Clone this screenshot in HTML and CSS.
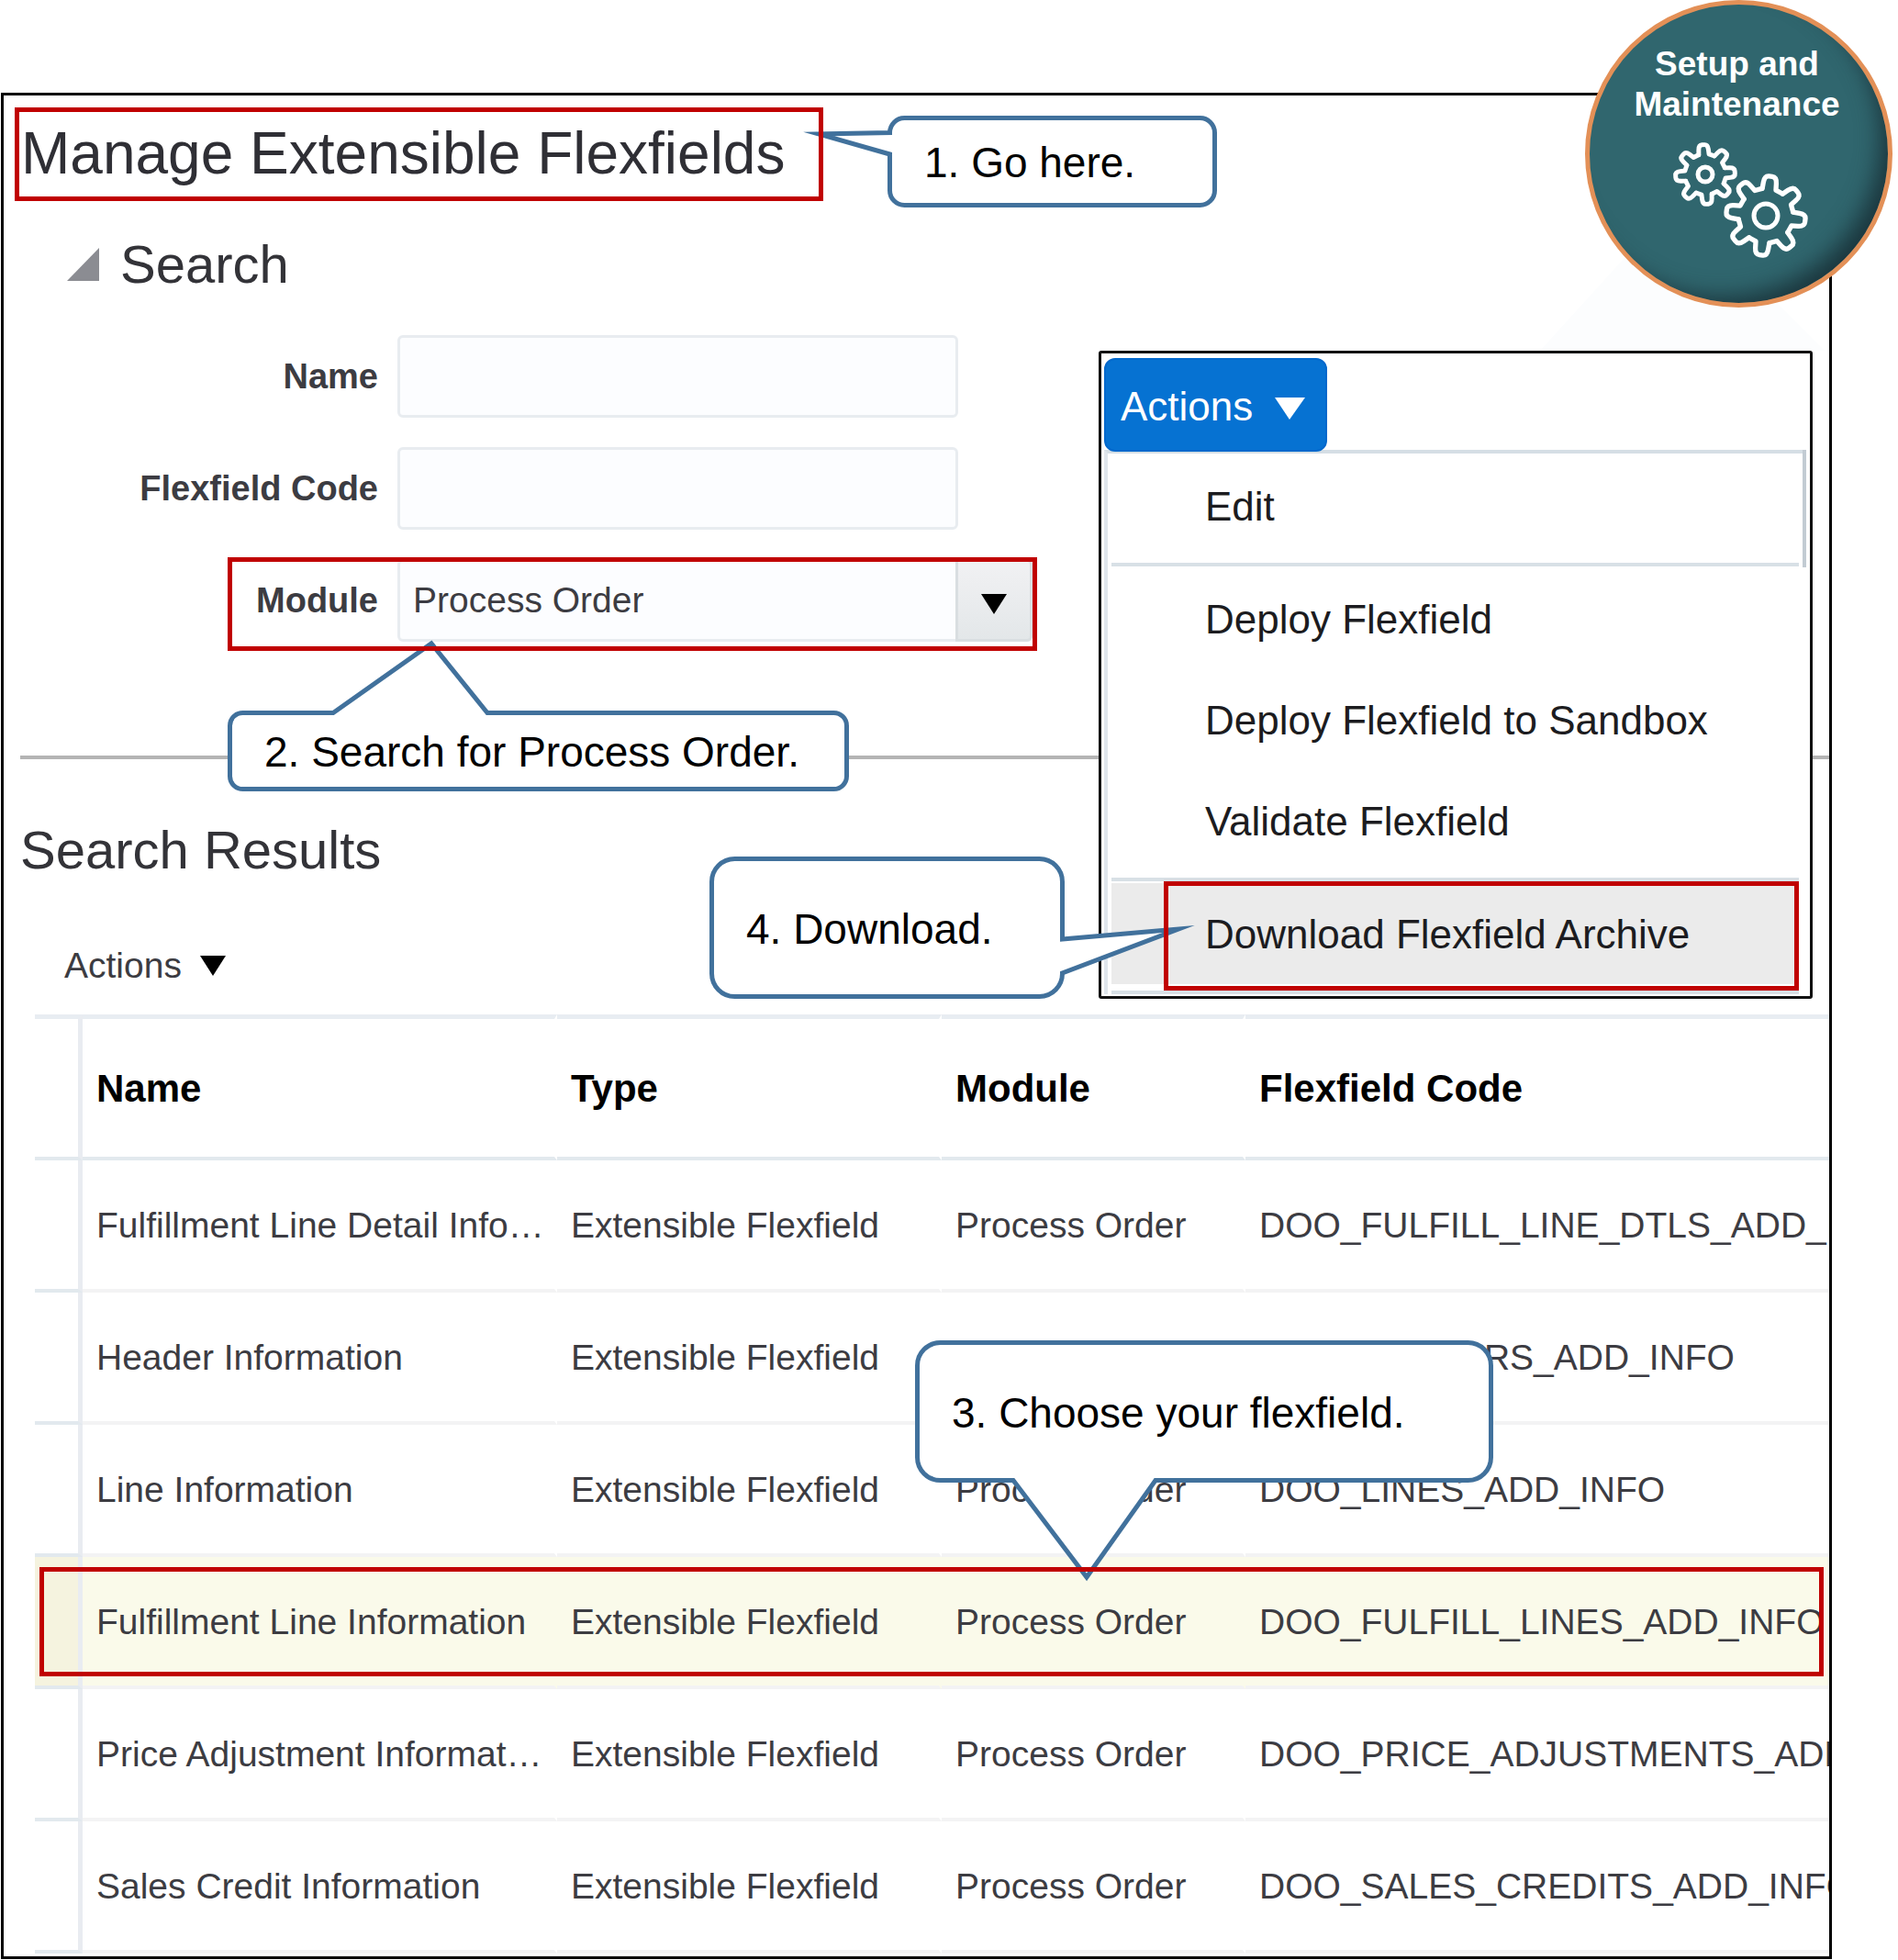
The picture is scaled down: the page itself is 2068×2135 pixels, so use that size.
FILE: index.html
```html
<!DOCTYPE html>
<html lang="en">
<head>
<meta charset="utf-8">
<title>Manage Extensible Flexfields</title>
<link rel="stylesheet" href="styles.css">
</head>
<body>
<div class="page">
  <main class="frame">
    <h1 class="title">Manage Extensible Flexfields</h1>

    <section class="search">
      <h2 class="heading search-heading">
        <svg class="disclosure" viewBox="0 0 35 36" aria-hidden="true"><path d="M35 0V36H0Z"/></svg>
        Search
      </h2>
      <form class="search-form">
        <div class="field">
          <label for="name">Name</label>
          <input id="name" type="text">
        </div>
        <div class="field">
          <label for="code">Flexfield Code</label>
          <input id="code" type="text">
        </div>
        <div class="field field-marked">
          <label for="module">Module</label>
          <div class="select-wrap">
            <select id="module"><option>Process Order</option></select>
            <span class="select-arrow"><svg class="caret" viewBox="0 0 28 22" aria-hidden="true"><path d="M0 0H28L14 22Z"/></svg></span>
          </div>
        </div>
      </form>
    </section>

    <hr class="divider">

    <section class="results">
      <h2 class="heading results-heading">Search Results</h2>
      <button class="actions" type="button">Actions
        <svg class="caret" viewBox="0 0 28 22" aria-hidden="true"><path d="M0 0H28L14 22Z"/></svg>
      </button>
      <table class="grid">
        <colgroup><col class="col-handle"><col class="col-name"><col class="col-type"><col class="col-module"><col></colgroup>
        <thead>
          <tr><td></td><th scope="col">Name</th><th scope="col">Type</th><th scope="col">Module</th><th scope="col">Flexfield Code</th></tr>
        </thead>
        <tbody>
          <tr><td></td><td>Fulfillment Line Detail Info…</td><td>Extensible Flexfield</td><td>Process Order</td><td>DOO_FULFILL_LINE_DTLS_ADD_INFO</td></tr>
          <tr><td></td><td>Header Information</td><td>Extensible Flexfield</td><td>Process Order</td><td>DOO_HEADERS_ADD_INFO</td></tr>
          <tr><td></td><td>Line Information</td><td>Extensible Flexfield</td><td>Process Order</td><td>DOO_LINES_ADD_INFO</td></tr>
          <tr class="selected"><td></td><td>Fulfillment Line Information</td><td>Extensible Flexfield</td><td>Process Order</td><td>DOO_FULFILL_LINES_ADD_INFO</td></tr>
          <tr><td></td><td>Price Adjustment Informat…</td><td>Extensible Flexfield</td><td>Process Order</td><td>DOO_PRICE_ADJUSTMENTS_ADD_INFO</td></tr>
          <tr><td></td><td>Sales Credit Information</td><td>Extensible Flexfield</td><td>Process Order</td><td>DOO_SALES_CREDITS_ADD_INFO</td></tr>
        </tbody>
      </table>
    </section>
  </main>

  <svg class="hills" viewBox="0 0 310 110" aria-hidden="true"><path d="M0 110L100 0H200L310 110Z"/></svg>

  <div class="menu-window">
    <button class="menu-button" type="button">Actions
      <svg class="menu-caret" viewBox="0 0 33 24" aria-hidden="true"><path d="M0 0H33L16 24Z"/></svg>
    </button>
    <ul class="menu">
      <li><button type="button">Edit</button></li>
      <li class="separator"></li>
      <li><button type="button">Deploy Flexfield</button></li>
      <li><button type="button">Deploy Flexfield to Sandbox</button></li>
      <li><button type="button">Validate Flexfield</button></li>
      <li class="separator"></li>
      <li class="active"><button type="button">Download Flexfield Archive</button></li>
      <li class="separator"></li>
    </ul>
  </div>

  <div class="callout callout-go">
    <svg viewBox="0 0 359 100" aria-hidden="true"><path d="M18.500 2.500H340.500A16 16 0 0 1 356.500 18.500V81.500A16 16 0 0 1 340.500 97.500H18.500A16 16 0 0 1 2.500 81.500V42L-75 20L2.500 18.500A16 16 0 0 1 18.500 2.500Z"/></svg>
    <p>1. Go here.</p>
  </div>
  <div class="callout callout-search">
    <svg viewBox="0 0 677 88" aria-hidden="true"><path d="M16.500 2.500H115L222 -73L283 2.500H660.500A14 14 0 0 1 674.500 16.500V71.500A14 14 0 0 1 660.500 85.500H16.500A14 14 0 0 1 2.500 71.500V16.500A14 14 0 0 1 16.500 2.500Z"/></svg>
    <p>2. Search for Process Order.</p>
  </div>
  <div class="callout callout-choose">
    <svg viewBox="0 0 630 155" aria-hidden="true"><path d="M27.500 2.500H602.500A25 25 0 0 1 627.500 27.500V127.500A25 25 0 0 1 602.500 152.500H262L187 258L107 152.500H27.500A25 25 0 0 1 2.500 127.500V27.500A25 25 0 0 1 27.500 2.500Z"/></svg>
    <p>3. Choose your flexfield.</p>
  </div>
  <div class="callout callout-download">
    <svg viewBox="0 0 387 155" aria-hidden="true"><path d="M27.500 2.500H359.500A25 25 0 0 1 384.500 27.500V90L511 79L384.500 127A25 25 0 0 1 359.500 152.500H27.500A25 25 0 0 1 2.500 127.500V27.500A25 25 0 0 1 27.500 2.500Z"/></svg>
    <p>4. Download.</p>
  </div>

  <div class="badge">
    <p>Setup and<br>Maintenance</p>
    <svg class="gears" viewBox="0 0 150 130" aria-hidden="true">
      <defs>
        <path id="tooth" d="M-17 -66L-16 -82Q-15 -98 -4 -98H4Q15 -98 16 -82L17 -66L34 -59"/>
        <g id="gear">
          <use href="#tooth"/>
          <use href="#tooth" transform="rotate(45)"/>
          <use href="#tooth" transform="rotate(90)"/>
          <use href="#tooth" transform="rotate(135)"/>
          <use href="#tooth" transform="rotate(180)"/>
          <use href="#tooth" transform="rotate(225)"/>
          <use href="#tooth" transform="rotate(270)"/>
          <use href="#tooth" transform="rotate(315)"/>
        </g>
      </defs>
      <use href="#gear" stroke-width="15" transform="translate(38 44) rotate(-4) scale(.33)"/>
      <circle cx="38" cy="44" r="8" stroke-width="5"/>
      <use href="#gear" stroke-width="12" transform="translate(104 89) rotate(7) scale(.44)"/>
      <circle cx="104" cy="89" r="13" stroke-width="5"/>
    </svg>
  </div>
</div>
</body>
</html>
```
FILE: styles.css
```css
:root {
  --red: #c00000;
  --blue: #41719c;
  --ink: #3c3c42;
}

*,
*::after { box-sizing: border-box; }

body {
  margin: 0;
  background: #fff;
  font-family: "Liberation Sans", Arial, sans-serif;
  font-size: 39px;
  line-height: 46px;
  color: var(--ink);
}

h1, h2, p, ul { margin: 0; padding: 0; font-weight: 400; }

button, input, select { font: inherit; color: inherit; }

.page {
  position: relative;
  padding: 101px 72px 1px 1px;
}

.frame {
  border: 3px solid #000;
  padding: 13px 0 3px;
  background: #fff;
}

.title {
  position: relative;
  z-index: 3;
  width: fit-content;
  margin-left: 12px;
  padding: 0 37px 2px 2px;
  border: 5px solid var(--red);
  font-size: 64px;
  line-height: 90px;
  color: #2f2f35;
}

.heading {
  font-size: 58px;
  line-height: 66px;
  color: #333338;
}

/* Search form */
.search-heading {
  display: flex;
  align-items: center;
  gap: 23px;
  margin: 36px 0 44px 69px;
}

.disclosure {
  width: 35px;
  height: 36px;
  fill: #8b8c92;
}

.search-form {
  display: flex;
  flex-direction: column;
  gap: 32px;
}

.field {
  position: relative;
  display: flex;
  align-items: center;
  gap: 21px;
}

.field label {
  width: 408px;
  text-align: right;
  font-size: 38px;
  font-weight: 700;
}

.field input,
.field select {
  height: 90px;
  border: 3px solid #e8ecf0;
  border-radius: 6px;
  background: #fcfdff;
}

.field input { width: 611px; padding: 0 16px; }

.select-wrap { position: relative; width: 692px; }

.field select {
  display: block;
  width: 100%;
  padding: 0 100px 0 14px;
  appearance: none;
}

.select-arrow {
  position: absolute;
  inset: 0 0 0 auto;
  display: grid;
  place-items: center;
  width: 84px;
  padding-top: 8px;
  border: 3px solid #d9dee1;
  border-radius: 0 6px 6px 0;
  background: linear-gradient(#f1f1f3, #e3e7e9);
  pointer-events: none;
}

.caret { width: 28px; height: 22px; fill: #000; }

.field-marked::after {
  content: "";
  position: absolute;
  z-index: 3;
  inset: -2px auto -10px 244px;
  width: 882px;
  border: 5px solid var(--red);
}

.divider {
  height: 4px;
  margin: 124px 0 66px 18px;
  border: 0;
  background: #b4b4b4;
}

/* Results */
.results-heading { margin: 0 0 70px 18px; }

.actions {
  display: flex;
  align-items: center;
  gap: 20px;
  margin: 0 0 30px 66px;
  padding: 0;
  border: 0;
  background: none;
}

.grid {
  width: calc(100% - 34px);
  margin-left: 34px;
  border-collapse: separate;
  border-spacing: 0;
  table-layout: fixed;
}

.col-handle { width: 52px; }
.col-name { width: 517px; }
.col-type { width: 419px; }
.col-module { width: 331px; }

.grid th,
.grid td {
  height: 144px;
  padding: 2px 0 0 15px;
  border: solid transparent;
  border-width: 0 3px 4px 0;
  border-bottom-color: #f3f3f4;
  overflow: hidden;
  text-align: left;
  white-space: nowrap;
}

.grid td:last-child,
.grid th:last-child { border-right: 0; }

.grid th,
.grid thead td {
  height: 159px;
  border-top: 5px solid #e8edf2;
  border-bottom-color: #e2e9ee;
  font-size: 42px;
  color: #000;
}

.grid td:first-child {
  border-right: 5px solid #e9ecf1;
  border-bottom-color: #e2e9ee;
}

.selected { position: relative; background: #fafaea; }
.selected td:first-child { background: #f5f3df; }

.selected td:first-child::after {
  content: "";
  position: absolute;
  z-index: 3;
  inset: 11px 6px 14px 5px;
  border: 5px solid var(--red);
}

/* Actions menu */
.hills {
  position: absolute;
  top: 272px;
  right: 80px;
  width: 310px;
  height: 110px;
  fill: #fcfdfe;
}

.menu-window {
  position: absolute;
  top: 382px;
  right: 93px;
  width: 778px;
  padding: 5px 4px 0 3px;
  border: 3px solid #111;
  border-radius: 3px;
  background: #fff;
  font-size: 44px;
  line-height: 52px;
  color: #1c1c20;
}

.menu-button {
  position: relative;
  z-index: 1;
  display: flex;
  align-items: center;
  gap: 24px;
  width: 243px;
  height: 102px;
  padding: 3px 0 0 16px;
  border: 2px solid #0068cc;
  border-radius: 12px;
  background: #0672d2;
  color: #fff;
}

.menu-caret { width: 33px; height: 24px; margin-top: 4px; fill: #fff; }

.menu {
  position: relative;
  margin-top: -2px;
  padding: 2px 8px 0 4px;
  border-top: 4px solid #d5dee5;
  border-left: 4px solid #dfe5eb;
  list-style: none;
}

.menu::after {
  content: "";
  position: absolute;
  top: -4px;
  right: 0;
  width: 4px;
  height: 128px;
  background: #c2cbd3;
}

.menu li { position: relative; }

.menu li button {
  width: 100%;
  height: 110px;
  padding: 2px 0 0 102px;
  border: 0;
  background: none;
  text-align: left;
}

.menu .separator {
  height: 4px;
  margin: 7px 0 2px;
  background: #d8e0e6;
}

.menu .active { background: #ebebeb; }

.menu .active::after {
  content: "";
  position: absolute;
  z-index: 3;
  inset: -2px 0 -7px 57px;
  border: 5px solid var(--red);
}

/* Step callouts */
.callout {
  position: absolute;
  z-index: 2;
  display: flex;
  align-items: center;
  padding: 2px 0 0 40px;
  font-size: 46px;
  line-height: 52px;
  color: #000;
}

.callout svg {
  position: absolute;
  inset: 0;
  width: 100%;
  height: 100%;
  overflow: visible;
  fill: #fff;
  stroke: var(--blue);
  stroke-width: 5;
  stroke-miterlimit: 12;
}

.callout p { position: relative; }

.callout-go { left: 967px; top: 126px; width: 359px; height: 100px; }
.callout-search { left: 248px; top: 774px; width: 677px; height: 88px; }
.callout-choose { left: 997px; top: 1460px; width: 630px; height: 155px; }
.callout-download { left: 773px; top: 933px; width: 387px; height: 155px; }

/* Work area badge */
.badge {
  position: absolute;
  z-index: 4;
  top: 0;
  right: 6px;
  width: 335px;
  height: 335px;
  padding: 43px 4px 0 0;
  border: 5px solid #e39057;
  border-radius: 50%;
  background: #30666e;
  box-shadow: inset -20px -18px 24px -12px #1b363d;
  text-align: center;
  font-size: 37px;
  line-height: 44px;
  color: #fff;
}

.badge p { font-weight: 700; }

.gears {
  display: block;
  width: 150px;
  height: 130px;
  margin: 10px 0 0 88px;
  overflow: visible;
  fill: none;
  stroke: #fff;
  stroke-linecap: round;
  stroke-linejoin: round;
}
```
